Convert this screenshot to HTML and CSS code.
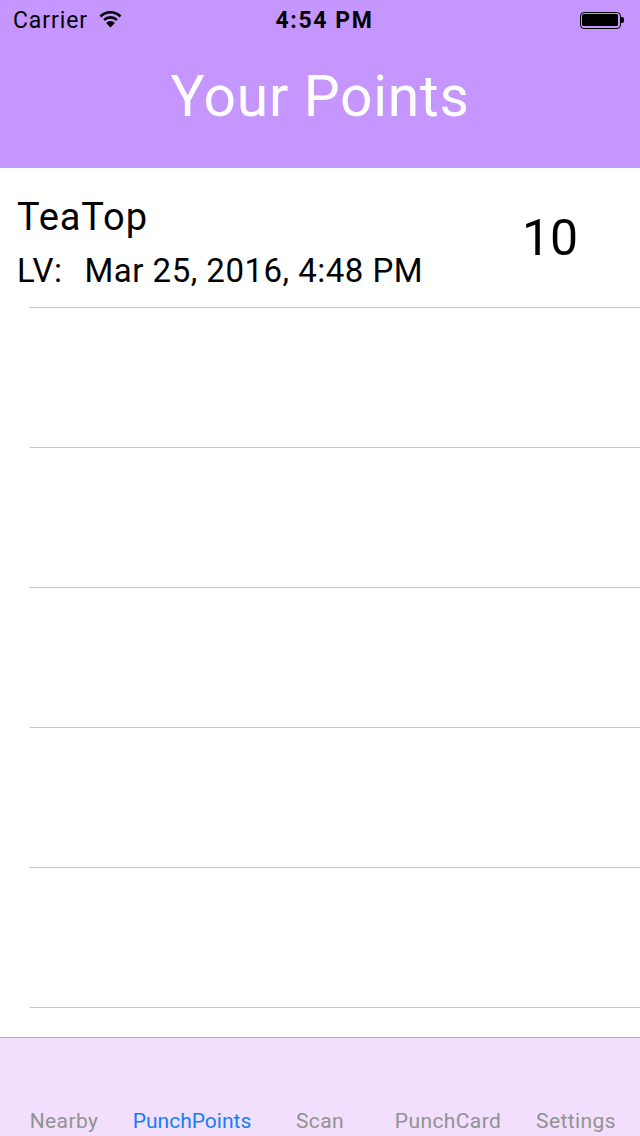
FILE: index.html
```html
<!DOCTYPE html>
<html>
<head>
<meta charset="utf-8">
<link rel="stylesheet" href="styles.css">
</head>
<body>
<div class="screen">
  <header class="header">
    <div class="status">
      <div class="status-left">
        <span class="carrier">Carrier</span>
        <svg class="wifi" width="25" height="18" viewBox="0 0 24 18">
          <path d="M2 6.5 A14 14 0 0 1 22 6.5" fill="none" stroke="#000" stroke-width="2.6"/>
          <path d="M5.6 10 A9 9 0 0 1 18.4 10" fill="none" stroke="#000" stroke-width="2.6"/>
          <path d="M12 17.5 L7.6 13 A6 6 0 0 1 16.4 13 Z" fill="#000"/>
        </svg>
      </div>
      <div class="time">4:54 PM</div>
      <div class="status-right">
        <div class="battery"><div class="battery-fill"></div></div>
        <div class="battery-nub"></div>
      </div>
    </div>
    <h1 class="title">Your Points</h1>
  </header>
  <main class="list">
    <div class="row">
      <div class="row-text">
        <div class="name">TeaTop</div>
        <div class="visit"><span class="lv">LV:</span><span>Mar 25, 2016, 4:48 PM</span></div>
      </div>
      <div class="points">10</div>
    </div>
    <div class="row empty"></div>
    <div class="row empty"></div>
    <div class="row empty"></div>
    <div class="row empty"></div>
    <div class="row empty"></div>
  </main>
  <nav class="tabbar">
    <div class="tab">Nearby</div>
    <div class="tab active">PunchPoints</div>
    <div class="tab">Scan</div>
    <div class="tab">PunchCard</div>
    <div class="tab">Settings</div>
  </nav>
</div>
</body>
</html>
```
FILE: styles.css
```css
* { box-sizing: border-box; margin: 0; padding: 0; }
html, body { width: 640px; height: 1136px; overflow: hidden; }
body { font-family: Roboto, "Liberation Sans", sans-serif; background: #fff; color: #000; }
.screen { width: 640px; height: 1136px; display: flex; flex-direction: column; }

.header { background: #c596fe; height: 168px; display: flex; flex-direction: column; }
.status { height: 40px; display: flex; align-items: center; justify-content: space-between; padding: 0 16px 0 13px; }
.status-left { display: flex; align-items: center; gap: 10px; width: 200px; }
.carrier { font-size: 23px; letter-spacing: 0.9px; }
.wifi { margin-top: -2px; }
.time { font-size: 23px; font-weight: 700; letter-spacing: 1.6px; margin-left: 12px; }
.status-right { width: 200px; display: flex; justify-content: flex-end; align-items: center; }
.battery { width: 41px; height: 17px; border: 1.5px solid #000; border-radius: 4px; padding: 1.5px; }
.battery-fill { width: 100%; height: 100%; background: #000; border-radius: 1.5px; }
.battery-nub { width: 3px; height: 6px; background: #000; border-radius: 0 2px 2px 0; }
.title { font-weight: 400; color: #fff; font-size: 57px; text-align: center; line-height: 57px; margin-top: 28px; letter-spacing: 0.7px; }

.list { flex: 1; display: flex; flex-direction: column; }
.row { height: 140px; margin-left: 30px; border-bottom: 1px solid #c8c7cc; flex-shrink: 0; }
.row:first-child { margin-left: 0; display: flex; justify-content: space-between; align-items: flex-start; padding: 25px 0 0 17px; position: relative; border-bottom: none; }
.row:first-child::after { content: ""; position: absolute; left: 30px; right: 0; bottom: 0; height: 1px; background: #c8c7cc; }
.row-text { display: flex; flex-direction: column; gap: 10px; }
.name { font-size: 38px; line-height: 48px; letter-spacing: 0.9px; }
.visit { font-size: 33px; line-height: 40px; display: flex; gap: 22px; letter-spacing: 0.5px; }
.points { font-size: 50px; width: 118px; align-self: center; margin-top: -26px; }

.tabbar { height: 99px; background: #f1dffd; border-top: 1px solid #b2b2b2; display: grid; grid-template-columns: repeat(5, 1fr); align-items: end; padding-bottom: 1px; }
.tab { text-align: center; font-size: 21px; color: #929292; line-height: 28px; letter-spacing: 0.4px; }
.tab.active { color: #147efb; letter-spacing: 0; }
```
